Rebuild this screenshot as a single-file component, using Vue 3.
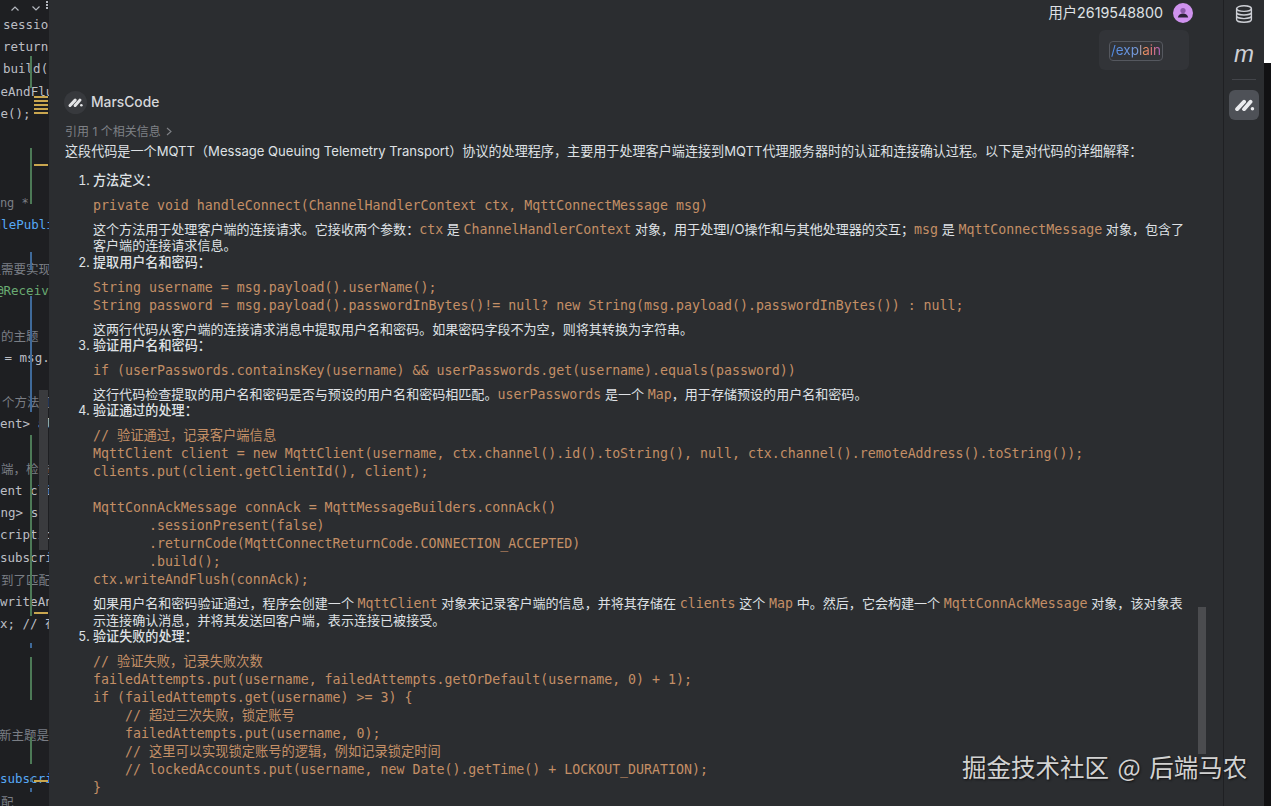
<script setup>
const editorLines = [
  { x: 3, t: 'session', c: 'pl' },
  { x: 3, t: 'return', c: 'pl' },
  { x: 3, t: 'build()', c: 'pl' },
  { x: -7, t: 'teAndFlush', c: 'pl' },
  { x: -7, t: 'te();', c: 'pl' },
  { x: 0, t: '', c: '' },
  { x: 0, t: '', c: '' },
  { x: 0, t: '', c: '' },
  { x: -29, t: 'String *', c: 'hint' },
  { x: -29, t: 'handlePublish', c: 'fn' },
  { x: 0, t: '', c: '' },
  { x: -24, t: '这里需要实现', c: 'cm' },
  { x: -4, t: '@Receive', c: 'gr' },
  { x: 0, t: '', c: '' },
  { x: 1, t: '的主题', c: 'cm' },
  { x: -3, t: ' = msg.', c: 'pl' },
  { x: 0, t: '', c: '' },
  { x: 2, t: '个方法可', c: 'cm' },
  { x: 0, t: 'ent> all', c: 'pl' },
  { x: 0, t: '', c: '' },
  { x: 1, t: '端，检查', c: 'cm' },
  { x: 0, t: 'ent cli', c: 'pl' },
  { x: -7, t: 'ing> su', c: 'pl' },
  { x: 0, t: 'cription', c: 'pl' },
  { x: 0, t: 'subscri', c: 'pl' },
  { x: 1, t: '到了匹配', c: 'cm' },
  { x: 0, t: 'writeAnd', c: 'pl' },
  { x: 0, t: 'x; // 在', c: 'pl' },
  { x: 0, t: '', c: '' },
  { x: 0, t: '', c: '' },
  { x: 0, t: '', c: '' },
  { x: 0, t: '', c: '' },
  { x: -1, t: '新主题是', c: 'cm' },
  { x: 0, t: '', c: '' },
  { x: 0, t: 'subscri', c: 'fn' },
  { x: 1, t: '配', c: 'cm' },
]
const marks = [
  { x: 30, y: 56, h: 32, c: '#4d7a57', w: 2 },
  { x: 30, y: 148, h: 56, c: '#4d7a57', w: 2 },
  { x: 30, y: 252, h: 18, c: '#3f6a9a', w: 2 },
  { x: 30, y: 296, h: 116, c: '#3f6a9a', w: 2 },
  { x: 30, y: 435, h: 181, c: '#4d7a57', w: 2 },
  { x: 30, y: 643, h: 5, c: '#3f6a9a', w: 2 },
  { x: 30, y: 657, h: 43, c: '#4d7a57', w: 2 },
  { x: 30, y: 737, h: 27, c: '#4d7a57', w: 2 },
  { x: 30, y: 778, h: 4, c: '#3f6a9a', w: 2 },
  { x: 30, y: 788, h: 4, c: '#3f6a9a', w: 2 },
  { x: 34, y: 96, h: 2, c: '#c9a64f', w: 14 },
  { x: 34, y: 100, h: 2, c: '#c9a64f', w: 14 },
  { x: 34, y: 104, h: 2, c: '#c9a64f', w: 14 },
  { x: 34, y: 108, h: 2, c: '#c9a64f', w: 14 },
  { x: 34, y: 112, h: 2, c: '#c9a64f', w: 14 },
  { x: 34, y: 164, h: 2, c: '#c9a64f', w: 14 },
  { x: 34, y: 612, h: 2, c: '#c9a64f', w: 14 },
  { x: 34, y: 780, h: 2, c: '#c9a64f', w: 14 },
]
</script>

<template>
  <div class="window">
    <aside class="editor">
      <div class="editor-top">
        <svg class="chev" width="8" height="5" viewBox="0 0 8 5"><path d="M.5 4.5L4 1l3.5 3.5" /></svg>
        <svg class="chev" width="8" height="5" viewBox="0 0 8 5"><path d="M.5.5L4 4 7.5.5" /></svg>
        <span class="dots"><i></i><i></i><i></i></span>
      </div>
      <div class="code-lines">
        <div v-for="(l, i) in editorLines" :key="i" class="eline" :class="l.c" :style="{ marginLeft: l.x + 'px' }">{{ l.t }}</div>
      </div>
      <div class="editor-thumb"></div>
      <i v-for="(m, i) in marks" :key="'m' + i" class="mark" :style="{ left: m.x + 'px', top: m.y + 'px', width: m.w + 'px', height: m.h + 'px', background: m.c }"></i>
    </aside>

    <main class="panel">
      <header class="user">
        <span class="uname">用户2619548800</span>
        <svg class="avatar" width="20" height="20" viewBox="0 0 20 20">
          <circle cx="10" cy="10" r="10" fill="#cf92ee" />
          <circle cx="10" cy="7.5" r="2.6" fill="#8a5aa8" />
          <path d="M4.8 14.5c.6-2.8 2.6-4 5.2-4s4.6 1.2 5.2 4z" fill="#2b2238" />
        </svg>
      </header>
      <div class="question">
        <div class="bubble"><span class="cmd"><span class="cmd-text">/explain</span></span></div>
      </div>

      <div class="answer-head">
        <span class="logo">
          <svg width="15" height="9" viewBox="0 0 22 13"><path d="M3 11l7.5-8M10.5 11l7-8" /><circle cx="19.6" cy="10.6" r="1.9" /></svg>
        </span>
        <span class="brand">MarsCode</span>
      </div>
      <div class="refs">引用 1 个相关信息 <svg width="6" height="9" viewBox="0 0 6 9"><path d="M1 1l4 3.5-4 3.5" /></svg></div>
      <p class="intro">这段代码是一个MQTT（Message Queuing Telemetry Transport）协议的处理程序，主要用于处理客户端连接到MQTT代理服务器时的认证和连接确认过程。以下是对代码的详细解释：</p>

      <ol class="steps">
        <li>
          <strong>方法定义：</strong>
          <pre>private void handleConnect(ChannelHandlerContext ctx, MqttConnectMessage msg)</pre>
          <p>这个方法用于处理客户端的连接请求。它接收两个参数：<code>ctx</code> 是 <code>ChannelHandlerContext</code> 对象，用于处理I/O操作和与其他处理器的交互；<code>msg</code> 是 <code>MqttConnectMessage</code> 对象，包含了客户端的连接请求信息。</p>
        </li>
        <li>
          <strong>提取用户名和密码：</strong>
          <pre>String username = msg.payload().userName();
String password = msg.payload().passwordInBytes()!= null? new String(msg.payload().passwordInBytes()) : null;</pre>
          <p>这两行代码从客户端的连接请求消息中提取用户名和密码。如果密码字段不为空，则将其转换为字符串。</p>
        </li>
        <li>
          <strong>验证用户名和密码：</strong>
          <pre>if (userPasswords.containsKey(username) &amp;&amp; userPasswords.get(username).equals(password))</pre>
          <p>这行代码检查提取的用户名和密码是否与预设的用户名和密码相匹配。<code>userPasswords</code> 是一个 <code>Map</code>，用于存储预设的用户名和密码。</p>
        </li>
        <li>
          <strong>验证通过的处理：</strong>
          <pre>// 验证通过，记录客户端信息
MqttClient client = new MqttClient(username, ctx.channel().id().toString(), null, ctx.channel().remoteAddress().toString());
clients.put(client.getClientId(), client);

MqttConnAckMessage connAck = MqttMessageBuilders.connAck()
       .sessionPresent(false)
       .returnCode(MqttConnectReturnCode.CONNECTION_ACCEPTED)
       .build();
ctx.writeAndFlush(connAck);</pre>
          <p>如果用户名和密码验证通过，程序会创建一个 <code>MqttClient</code> 对象来记录客户端的信息，并将其存储在 <code>clients</code> 这个 <code>Map</code> 中。然后，它会构建一个 <code>MqttConnAckMessage</code> 对象，该对象表示连接确认消息，并将其发送回客户端，表示连接已被接受。</p>
        </li>
        <li>
          <strong>验证失败的处理：</strong>
          <pre>// 验证失败，记录失败次数
failedAttempts.put(username, failedAttempts.getOrDefault(username, 0) + 1);
if (failedAttempts.get(username) >= 3) {
    // 超过三次失败，锁定账号
    failedAttempts.put(username, 0);
    // 这里可以实现锁定账号的逻辑，例如记录锁定时间
    // lockedAccounts.put(username, new Date().getTime() + LOCKOUT_DURATION);
}</pre>
        </li>
      </ol>
      <div class="thumb"></div>
    </main>

    <nav class="rail">
      <svg class="db" width="18" height="18" viewBox="0 0 18 18">
        <ellipse cx="9" cy="3.6" rx="7.4" ry="2.8" />
        <path d="M1.6 3.6v10.8c0 1.5 3.3 2.8 7.4 2.8s7.4-1.3 7.4-2.8V3.6M1.6 7.2c0 1.5 3.3 2.8 7.4 2.8s7.4-1.3 7.4-2.8M1.6 10.8c0 1.5 3.3 2.8 7.4 2.8s7.4-1.3 7.4-2.8" />
      </svg>
      <span class="m">m</span>
      <i class="rule"></i>
      <span class="active">
        <svg width="21" height="12" viewBox="0 0 22 13"><path d="M3 11l7.5-8M10.5 11l7-8" /><circle cx="19.6" cy="10.6" r="1.9" /></svg>
      </span>
    </nav>

    <div class="edge"><div class="edge-top"></div></div>
    <div class="watermark">掘金技术社区 @ 后端马农</div>
  </div>
</template>

<style>
html, body { margin: 0; background: #2b2d30; }
</style>

<style scoped>
.window {
  position: relative;
  display: grid;
  grid-template-columns: 49px 1174px 41px 7px;
  width: 1271px;
  height: 806px;
  overflow: hidden;
  background: #2b2d30;
  font-family: Inter, "Noto Sans CJK SC", sans-serif;
  color: #dfe1e5;
}
.editor {
  position: relative;
  overflow: hidden;
  background: #1e1f22;
  font-family: "DejaVu Sans Mono", "Noto Sans CJK SC", monospace;
  font-size: 12.5px;
}
.editor-top {
  position: absolute;
  top: 3px;
  left: 11px;
  display: flex;
  align-items: center;
  gap: 13px;
  height: 10px;
}
.chev path { fill: none; stroke: #b4b8bf; stroke-width: 1.2; }
.dots { display: flex; flex-direction: column; gap: 1px; margin: -2px 0 0 -7px; align-self: flex-start; }
.dots i { display: block; width: 2px; height: 2px; background: #b4b8bf; }
.code-lines { padding-top: 14px; }
.eline { height: 22.2px; line-height: 22.2px; white-space: pre; }
.pl { color: #bcbec4; }
.cm { color: #7a7e85; font-family: "Noto Sans CJK SC", sans-serif; font-size: 12.5px; }
.hint { color: #7a7e85; font-size: 12px; }
.fn { color: #56a8f5; }
.gr { color: #6aab73; }
.editor-thumb { position: absolute; left: 39px; top: 390px; width: 9px; height: 160px; background: #3a3b3e; }
.mark { position: absolute; display: block; }

.panel {
  position: relative;
  min-width: 0;
  overflow: hidden;
  font-size: 12.5px;
  line-height: 17px;
}
.user {
  display: flex;
  justify-content: flex-end;
  align-items: center;
  gap: 10px;
  height: 25px;
  padding-right: 30px;
  font-size: 14.3px;
}
.avatar { display: block; }
.question { display: flex; justify-content: flex-end; padding: 5px 34px 0 0; }
.bubble {
  width: 90px;
  height: 40px;
  box-sizing: border-box;
  padding: 11px 0 0 10px;
  border-radius: 6px;
  background: #323438;
}
.cmd {
  display: inline-block;
  width: 54px;
  height: 20px;
  box-sizing: border-box;
  text-align: center;
  line-height: 17px;
  font-size: 13.5px;
  border: 1px solid #55585f;
  border-radius: 4px;
}
.cmd-text {
  background: linear-gradient(90deg, #4f8ce8 0%, #7a9bd8 56%, #e8955a 64%, #e0757a 82%, #a85fc4 100%);
  -webkit-background-clip: text;
  background-clip: text;
  color: transparent;
}
.answer-head {
  display: flex;
  align-items: center;
  gap: 4px;
  margin: 21px 0 0 15px;
  height: 23px;
}
.logo {
  display: flex;
  align-items: center;
  justify-content: center;
  width: 23px;
  height: 23px;
  border-radius: 50%;
  background: #37393d;
}
.logo path { fill: none; stroke: #e4e5e7; stroke-width: 4.4; stroke-linecap: round; }
.logo circle { fill: #e4e5e7; }
.brand { font-size: 13.8px; font-weight: 500; color: #d5d7db; }
.refs {
  display: flex;
  align-items: center;
  gap: 4px;
  margin: 8px 0 0 16px;
  height: 18px;
  font-size: 12px;
  color: #7f8186;
}
.refs svg { margin-left: 1px; }
.refs path { fill: none; stroke: #7f8186; stroke-width: 1.1; }
.intro { margin: 3px 0 0 16px; font-size: 13.1px; height: 17px; white-space: nowrap; }
.steps {
  margin: 12px 0 0;
  padding: 0 40px 0 44px;
  width: 1095px;
  box-sizing: content-box;
}
.steps li { padding: 0; }
.steps li::marker { color: #dfe1e5; font-size: 12.5px; }
.steps strong { display: block; font-size: 13.1px; font-weight: 500; height: 17px; }
.steps p { margin: 0; font-size: 13.05px; line-height: 16.5px; }
.steps pre {
  margin: 8px 0 5.75px;
  font-family: "DejaVu Sans Mono", "Noto Sans CJK SC", monospace;
  font-size: 13.28px;
  line-height: 18px;
  color: #c48f66;
}
.steps code {
  font-family: "DejaVu Sans Mono", monospace;
  font-size: 13.28px;
  line-height: 0;
  color: #c48f66;
}
.thumb { position: absolute; right: 17px; top: 607px; width: 8px; height: 147px; background: #4b4c4f; }
.watermark {
  position: absolute;
  left: 962px;
  top: 749px;
  font-family: "Noto Sans CJK SC", sans-serif;
  font-size: 24.5px;
  line-height: 36px;
  word-spacing: 3px;
  white-space: nowrap;
  color: #d2d2d2;
  text-shadow: 1px 1px 2px #111;
}
.rail {
  display: flex;
  flex-direction: column;
  align-items: center;
  border-left: 1px solid #1f2023;
  box-sizing: border-box;
}
.db { margin-top: 5px; }
.db ellipse, .db path { fill: none; stroke: #ced0d6; stroke-width: 1.4; }
.m {
  margin-top: 17px;
  height: 28px;
  font-family: "Liberation Sans", sans-serif;
  font-style: italic;
  font-size: 24px;
  line-height: 28px;
  color: #ced0d6;
}
.rule { display: block; width: 24px; height: 1px; margin-top: 11px; background: #43454a; }
.active {
  display: flex;
  align-items: center;
  justify-content: center;
  width: 30px;
  height: 30px;
  margin-top: 10px;
  border-radius: 6px;
  background: #4e5157;
}
.active path { fill: none; stroke: #ebecef; stroke-width: 4.2; stroke-linecap: round; }
.active circle { fill: #ebecef; }
.edge { background: #111113; }
.edge-top { height: 63px; background: #fff; }
</style>
